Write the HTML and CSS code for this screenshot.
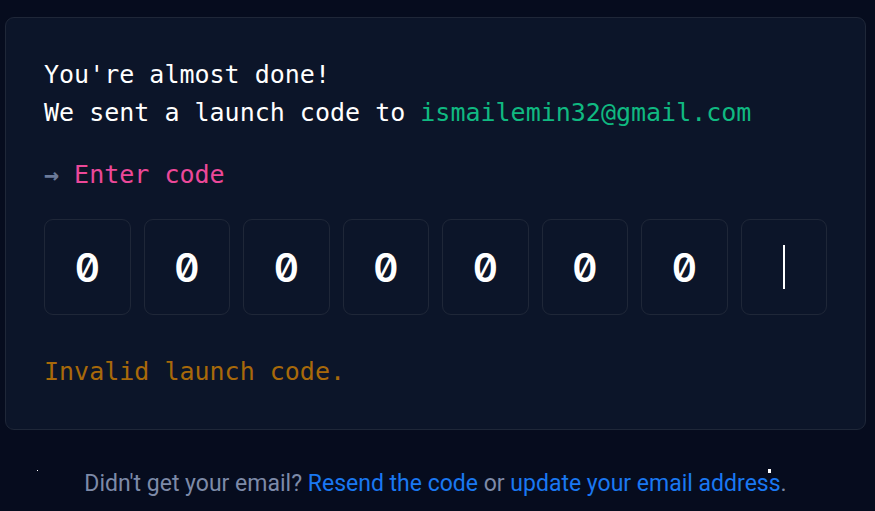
FILE: index.html
```html
<!DOCTYPE html>
<html lang="en">
<head>
    <meta charset="UTF-8">
    <meta name="viewport" content="width=device-width, initial-scale=1.0">
    <title>Enter launch code</title>
    <link rel="stylesheet" href="styles.css">
</head>
<body>

    <!-- Verification card -->
    <div class="card">
        <p class="intro">You're almost done!<br>We sent a launch code to <span class="email">ismailemin32@gmail.com</span></p>

        <p class="prompt"><span class="arrow">→</span> Enter code</p>

        <div class="code-row">
            <div class="code-box">0</div>
            <div class="code-box">0</div>
            <div class="code-box">0</div>
            <div class="code-box">0</div>
            <div class="code-box">0</div>
            <div class="code-box">0</div>
            <div class="code-box">0</div>
            <div class="code-box"><span class="caret"></span></div>
        </div>

        <p class="error">Invalid launch code.</p>
    </div>

    <p class="footer">
        <span class="speck speck-left"></span>
        Didn't get your email? <a href="#">Resend the code</a> or <a href="#">update your email address</a>.
        <span class="speck speck-right"></span>
    </p>

</body>
</html>
```

FILE: styles.css
```css
body {
    margin: 0;
    background: #060c1e;
    color: white;
    font-family: 'DejaVu Sans Mono', monospace;
    padding: 17px 9px 0 5px;
}

.card {
    background: #0c1529;
    border: 1px solid #1f2738;
    border-radius: 9px;
    padding: 38px 38px 38px;
}

.intro {
    margin: 0;
    font-size: 25px;
    line-height: 38px;
}

.email {
    color: #10b981;
}

.prompt {
    margin: 24px 0 0;
    font-size: 25px;
    line-height: 38px;
    color: #ec4899;
}

.arrow {
    color: #6b7a99;
    font-weight: bold;
}

.code-row {
    display: flex;
    gap: 13px;
    margin-top: 25px;
}

.code-box {
    flex: 1;
    height: 94px;
    border: 1px solid #1f2738;
    border-radius: 9px;
    display: flex;
    align-items: center;
    justify-content: center;
    font-family: Inter, sans-serif;
    font-feature-settings: "zero" 1, "tnum" 1;
    font-size: 39px;
    font-weight: 600;
}

.caret {
    width: 2px;
    height: 44px;
    background: white;
}

.error {
    margin: 38px 0 0;
    font-size: 25px;
    line-height: 38px;
    color: #a8690a;
}

.footer {
    position: relative;
    margin: 40px 0 0;
    text-align: center;
    font-family: Roboto, sans-serif;
    font-size: 23px;
    color: #7d8aa8;
}

.footer a {
    color: #1a78f2;
    text-decoration: none;
}

.speck {
    position: absolute;
    background: white;
}

.speck-left {
    left: 32px;
    top: 0;
    width: 1px;
    height: 1px;
}

.speck-right {
    left: 763px;
    top: -1px;
    width: 3px;
    height: 4px;
}
```
